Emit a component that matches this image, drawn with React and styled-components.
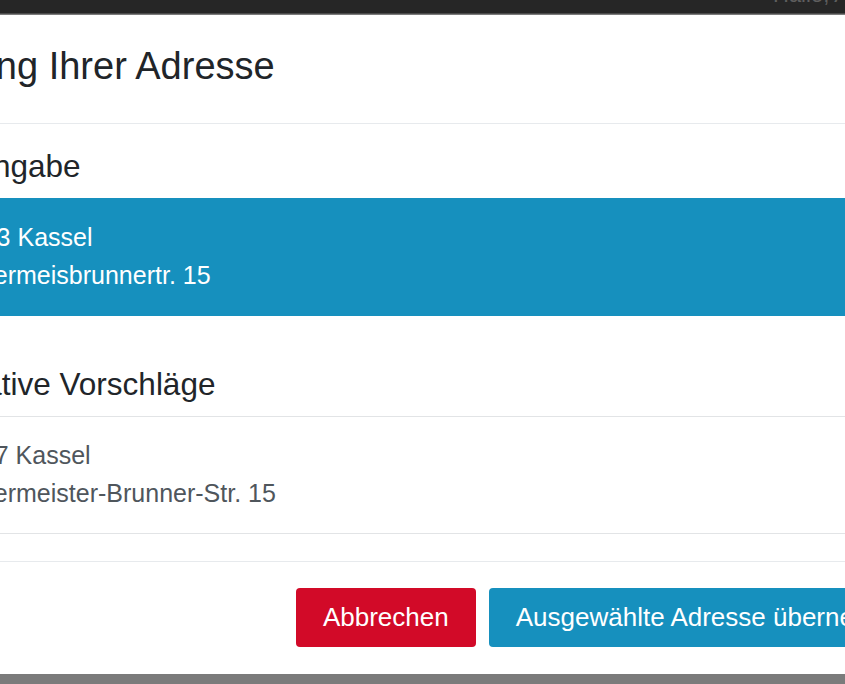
import React from "react";
import styled, { createGlobalStyle } from "styled-components";

const GlobalStyle = createGlobalStyle`
  html, body {
    margin: 0;
    padding: 0;
    background: #7b7b7b;
    overflow: hidden;
  }
  body {
    font-family: "Liberation Sans", Arial, Helvetica, sans-serif;
  }
`;

const Page = styled.div`
  width: 845px;
  height: 684px;
  overflow: hidden;
  background: #7b7b7b;
`;

const NavBar = styled.div`
  height: 13px;
  background: #262626;
  border-bottom: 1px solid #4a4a4a;
  display: flex;
  align-items: flex-end;
  overflow: hidden;
  padding-left: 773px;
`;

const Greeting = styled.span`
  font-size: 22px;
  line-height: 22px;
  color: #5e5e5e;
  white-space: nowrap;
  margin-bottom: 7px;
`;

const Dialog = styled.div`
  width: 1092px;
  margin-left: -122px;
  margin-top: 1px;
  background: #fff;
  color: #212529;
`;

const Header = styled.div`
  padding: 26px 24px 31px 27px;
  border-bottom: 1px solid #e7eaed;
`;

const Title = styled.h4`
  margin: 0;
  font-size: 38px;
  font-weight: 400;
  line-height: 51px;
  white-space: nowrap;
`;

const Body = styled.div`
  padding: 24px 24px 27px;
`;

const SectionTitle = styled.h5`
  margin: ${({ $first }) => ($first ? "0" : "50px")} 0 14px;
  font-size: 31.5px;
  font-weight: 400;
  line-height: 36px;
  white-space: nowrap;
`;

const List = styled.div`
  display: flex;
  flex-direction: column;
`;

const Item = styled.div`
  padding: 19px 30px 21px 39px;
  font-size: 25px;
  line-height: 38px;
  white-space: nowrap;
  background: ${({ $active }) => ($active ? "#1690be" : "#fff")};
  color: ${({ $active }) => ($active ? "#fff" : "#4f565c")};
  border: 1px solid ${({ $active }) => ($active ? "#1690be" : "#e2e4e6")};
  border-left: none;
  border-right: none;
`;

const Footer = styled.div`
  display: flex;
  justify-content: flex-end;
  gap: 13px;
  padding: 26px 24px 27px;
  border-top: 1px solid #e7eaed;
`;

const Button = styled.button`
  height: 59px;
  padding: 0 27px;
  border: none;
  border-radius: 4px;
  font-family: inherit;
  font-size: 26px;
  color: #fff;
  white-space: nowrap;
  background: ${({ $variant }) => ($variant === "danger" ? "#d20a28" : "#1690be")};
  cursor: pointer;
`;

const input = { zip: "34123 Kassel", street: "Bürgermeisbrunnertr. 15" };
const suggestions = [{ zip: "34117 Kassel", street: "Bürgermeister-Brunner-Str. 15" }];

export default function App() {
  return (
    <Page>
      <GlobalStyle />
      <NavBar>
        <Greeting>Hallo, Anna Müller</Greeting>
      </NavBar>
      <Dialog>
        <Header>
          <Title>Prüfung Ihrer Adresse</Title>
        </Header>
        <Body>
          <SectionTitle $first>Ihre Eingabe</SectionTitle>
          <List>
            <Item $active>
              <div>{input.zip}</div>
              <div>{input.street}</div>
            </Item>
          </List>
          <SectionTitle>Alternative Vorschläge</SectionTitle>
          <List>
            {suggestions.map((s) => (
              <Item key={s.street}>
                <div>{s.zip}</div>
                <div>{s.street}</div>
              </Item>
            ))}
          </List>
        </Body>
        <Footer>
          <Button $variant="danger">Abbrechen</Button>
          <Button>Ausgewählte Adresse übernehmen</Button>
        </Footer>
      </Dialog>
    </Page>
  );
}
